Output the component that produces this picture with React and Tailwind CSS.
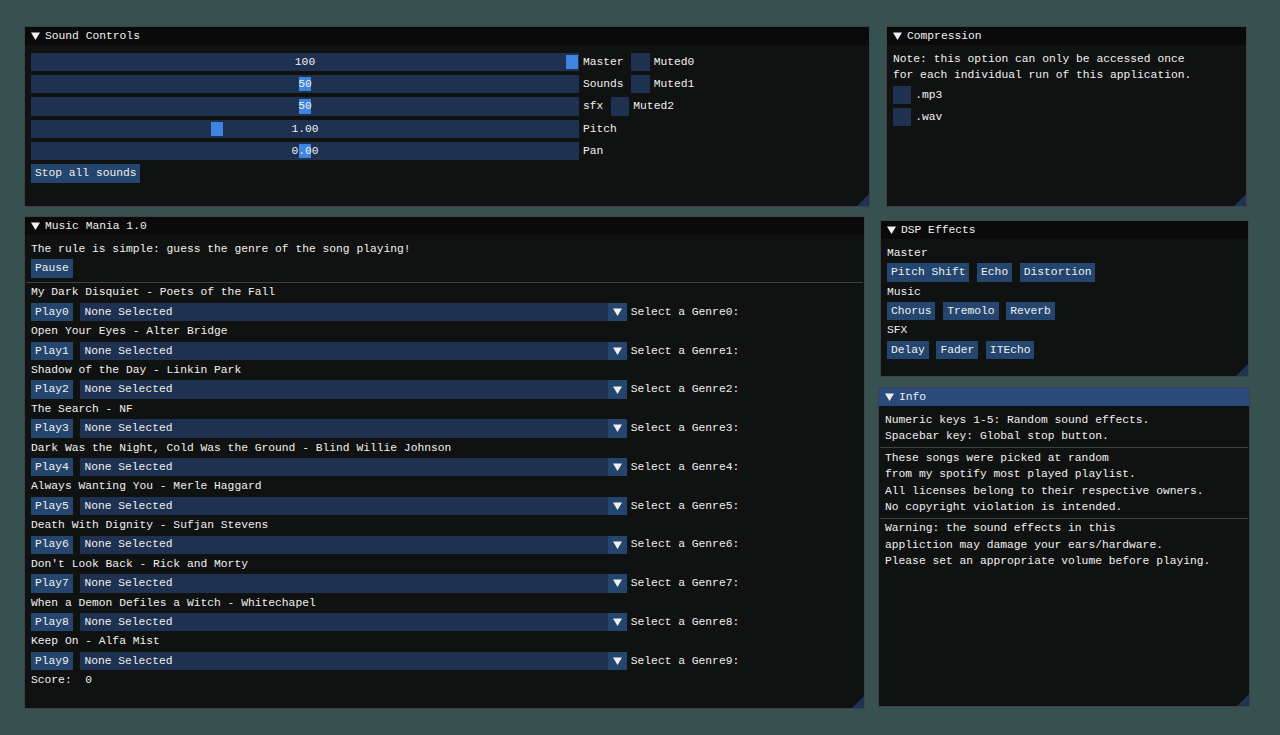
const songs = [
  'My Dark Disquiet - Poets of the Fall',
  'Open Your Eyes - Alter Bridge',
  'Shadow of the Day - Linkin Park',
  'The Search - NF',
  'Dark Was the Night, Cold Was the Ground - Blind Willie Johnson',
  'Always Wanting You - Merle Haggard',
  'Death With Dignity - Sufjan Stevens',
  "Don't Look Back - Rick and Morty",
  'When a Demon Defiles a Witch - Whitechapel',
  'Keep On - Alfa Mist',
];

const sliders = [
  { value: '100', grab: 535, label: 'Master', muted: 'Muted0' },
  { value: '50', grab: 268, label: 'Sounds', muted: 'Muted1' },
  { value: '50', grab: 268, label: 'sfx', muted: 'Muted2' },
  { value: '1.00', grab: 180, label: 'Pitch' },
  { value: '0.00', grab: 268, label: 'Pan' },
];

function Arrow() {
  return (
    <svg width="9" height="8" viewBox="0 0 9 8" className="shrink-0">
      <polygon points="0,0.5 9,0.5 4.5,8" fill="#f0f0f0" />
    </svg>
  );
}

function Grip() {
  // resize grip in the bottom right corner
  return (
    <svg width="12" height="12" viewBox="0 0 12 12" className="absolute right-0 bottom-0">
      <polygon points="12,0 12,12 0,12" fill="#1f3352" />
    </svg>
  );
}

function Window({ title, active, pos, children }) {
  return (
    <div className={`absolute flex flex-col border border-[#404049] bg-[#101111] ${pos}`}>
      <div className={`flex h-[18px] shrink-0 items-center gap-[5px] pl-[6px] ${active ? 'bg-[#294a7a]' : 'bg-[#0a0a0a]'}`}>
        <Arrow />
        <span>{title}</span>
      </div>
      <div className="flex flex-col gap-[3.9px] px-[6px] pt-[7.8px]">{children}</div>
      <Grip />
    </div>
  );
}

function Button({ children }) {
  return (
    <div className="flex h-[18.4px] shrink-0 items-center self-start bg-[#24456e] px-[3.9px]">{children}</div>
  );
}

function Check() {
  return <div className="h-[18.4px] w-[18.4px] shrink-0 bg-[#1e3150]" />;
}

function Separator() {
  return <div className="-mx-[5px] h-px shrink-0 bg-[#404049]" />;
}

function SliderRow({ value, grab, label, muted }) {
  return (
    <div className="flex h-[18.4px] items-center">
      <div className="relative flex h-full w-[548px] items-center justify-center bg-[#1e3150]">
        <div className="absolute top-[2px] bottom-[2px] w-[11.5px] bg-[#3d85e0]" style={{ left: grab }} />
        <span className="relative">{value}</span>
      </div>
      <span className="ml-[3.9px]">{label}</span>
      {muted && (
        <>
          <div className="ml-[7.8px]"><Check /></div>
          <span className="ml-[3.9px]">{muted}</span>
        </>
      )}
    </div>
  );
}

function SongRow({ i }) {
  return (
    <div className="flex h-[18.4px] items-center">
      <Button>Play{i}</Button>
      <div className="ml-[7.8px] flex h-full w-[546.4px]">
        <div className="flex flex-1 items-center bg-[#1e3150] px-[3.9px]">None Selected</div>
        <div className="flex w-[18.4px] items-center justify-center bg-[#24456e]">
          <Arrow />
        </div>
      </div>
      <span className="ml-[3.9px]">Select a Genre{i}:</span>
    </div>
  );
}

function Line({ children }) {
  return <div className="h-[12.6px] whitespace-pre">{children}</div>;
}

export default function App() {
  return (
    <div className="relative h-[735px] w-[1280px] overflow-hidden bg-[#375150] font-['Liberation_Mono','DejaVu_Sans_Mono',monospace] text-[11.3px] leading-[12.6px] text-[#f0f0f0]">
      <Window title="Sound Controls" pos="left-[24px] top-[26px] w-[846px] h-[181px]">
        {sliders.map((s) => (
          <SliderRow key={s.label} {...s} />
        ))}
        <Button>Stop all sounds</Button>
      </Window>

      <Window title="Compression" pos="left-[886px] top-[26px] w-[361px] h-[181px]">
        <Line>Note: this option can only be accessed once</Line>
        <Line>for each individual run of this application.</Line>
        <div className="flex items-center gap-[3.9px]"><Check /><span>.mp3</span></div>
        <div className="flex items-center gap-[3.9px]"><Check /><span>.wav</span></div>
      </Window>

      <Window title="Music Mania 1.0" pos="left-[24px] top-[216px] w-[841px] h-[493px]">
        <Line>The rule is simple: guess the genre of the song playing!</Line>
        <Button>Pause</Button>
        <Separator />
        {songs.map((song, i) => (
          <div key={song} className="flex flex-col gap-[3.9px]">
            <Line>{song}</Line>
            <SongRow i={i} />
          </div>
        ))}
        <Line>Score:  0</Line>
      </Window>

      <Window title="DSP Effects" pos="left-[880px] top-[220px] w-[369px] h-[157px]">
        <Line>Master</Line>
        <div className="flex gap-[7.8px]">
          <Button>Pitch Shift</Button>
          <Button>Echo</Button>
          <Button>Distortion</Button>
        </div>
        <Line>Music</Line>
        <div className="flex gap-[7.8px]">
          <Button>Chorus</Button>
          <Button>Tremolo</Button>
          <Button>Reverb</Button>
        </div>
        <Line>SFX</Line>
        <div className="flex gap-[7.8px]">
          <Button>Delay</Button>
          <Button>Fader</Button>
          <Button>ITEcho</Button>
        </div>
      </Window>

      <Window title="Info" active pos="left-[878px] top-[387px] w-[372px] h-[320px]">
        <Line>Numeric keys 1-5: Random sound effects.</Line>
        <Line>Spacebar key: Global stop button.</Line>
        <Separator />
        <Line>These songs were picked at random</Line>
        <Line>from my spotify most played playlist.</Line>
        <Line>All licenses belong to their respective owners.</Line>
        <Line>No copyright violation is intended.</Line>
        <Separator />
        <Line>Warning: the sound effects in this</Line>
        <Line>appliction may damage your ears/hardware.</Line>
        <Line>Please set an appropriate volume before playing.</Line>
      </Window>
    </div>
  );
}
